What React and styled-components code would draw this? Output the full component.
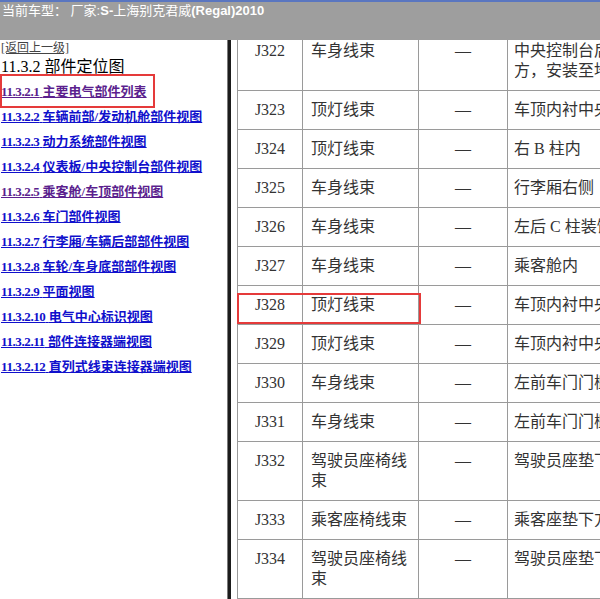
import React from 'react';
import styled, { createGlobalStyle, css } from 'styled-components';

const Global = createGlobalStyle`
  html, body { margin: 0; padding: 0; background: #fff; }
  body { font-family: "Liberation Serif", "Noto Sans CJK SC", serif; }
  * { box-sizing: border-box; }
`;

const Page = styled.div`
  width: 600px;
  height: 599px;
  display: flex;
  flex-direction: column;
  overflow: hidden;
`;

const Header = styled.header`
  flex: none;
  height: 40px;
  background: #9e9e9e;
  border-top: 2px solid #5a76c0;
  color: #fff;
  font: 13px/16px "Liberation Sans", "Noto Sans CJK SC", sans-serif;
  padding: 1px 0 0 2px;
  white-space: nowrap;
`;

const Latin = styled.span`
  font-weight: bold;
`;

const Body = styled.div`
  flex: 1;
  min-height: 0;
  display: flex;
`;

const LeftPane = styled.nav`
  flex: none;
  width: 228px;
  border-right: 1px solid #7c7c7c;
  padding: 0 0 0 1px;
  display: flex;
  flex-direction: column;
`;

const Splitter = styled.div`
  flex: none;
  width: 3px;
  background: #1c1c1c;
`;

const BackLink = styled.a`
  display: block;
  width: fit-content;
  font: 12px/16px "Liberation Serif", "Noto Sans CJK SC", serif;
  color: #444;
  text-decoration: underline;
`;

const Title = styled.h3`
  margin: 0;
  font: 16px/22px "Liberation Serif", "Noto Sans CJK SC", serif;
  color: #000;
`;

const LinkList = styled.ul`
  list-style: none;
  margin: 0;
  padding: 0;
  display: flex;
  flex-direction: column;
`;

const LinkItem = styled.li`
  position: relative;
  line-height: 25px;
  height: 25px;
  ${(p) =>
    p.$marked &&
    css`
      &::after {
        content: "";
        position: absolute;
        left: -1px;
        top: -4px;
        width: 151px;
        height: 30px;
        border: 2px solid #e53a3a;
      }
    `}
`;

const NavLink = styled.a`
  font: bold 13px/25px "Liberation Serif", "Noto Sans CJK SC", serif;
  color: ${(p) => (p.$visited ? '#5b1f8e' : '#1010cc')};
  text-decoration: underline;
  white-space: nowrap;
`;

const Num = styled.span`
  letter-spacing: -0.4px;
`;

const RightPane = styled.main`
  flex: 1;
  min-width: 0;
  overflow: hidden;
  padding-left: 6px;
`;

const Table = styled.table`
  margin-top: -9px;
  border-collapse: collapse;
  table-layout: fixed;
  width: 430px;
  color: #333;
  font: 16px/20px "Liberation Serif", "Noto Sans CJK SC", serif;
`;

const Cell = styled.td`
  border: 1px solid #9a9a9a;
  padding: 9px 8px 9px 8px;
  vertical-align: top;
  text-align: ${(p) => (p.$center ? 'center' : 'left')};
  ${(p) => p.$pad && css`padding-left: ${p.$pad}px;`}
  position: relative;
  ${(p) =>
    p.$marked &&
    css`
      &::after {
        content: "";
        position: absolute;
        left: -1px;
        top: 7px;
        width: 180px;
        height: 27px;
        border: 2px solid #e53a3a;
      }
    `}
`;

const links = [
  ['11.3.2.1', '主要电气部件列表', true, true],
  ['11.3.2.2', '车辆前部/发动机舱部件视图'],
  ['11.3.2.3', '动力系统部件视图'],
  ['11.3.2.4', '仪表板/中央控制台部件视图'],
  ['11.3.2.5', '乘客舱/车顶部件视图', true],
  ['11.3.2.6', '车门部件视图'],
  ['11.3.2.7', '行李厢/车辆后部部件视图'],
  ['11.3.2.8', '车轮/车身底部部件视图'],
  ['11.3.2.9', '平面视图'],
  ['11.3.2.10', '电气中心标识视图'],
  ['11.3.2.11', '部件连接器端视图'],
  ['11.3.2.12', '直列式线束连接器端视图'],
];

const rows = [
  ['J322', '车身线束', '中央控制台后部下方，安装至地板上'],
  ['J323', '顶灯线束', '车顶内衬中央'],
  ['J324', '顶灯线束', '右 B 柱内'],
  ['J325', '车身线束', '行李厢右侧'],
  ['J326', '车身线束', '左后 C 柱装饰板'],
  ['J327', '车身线束', '乘客舱内'],
  ['J328', '顶灯线束', '车顶内衬中央', true],
  ['J329', '顶灯线束', '车顶内衬中央'],
  ['J330', '车身线束', '左前车门门槛'],
  ['J331', '车身线束', '左前车门门槛'],
  ['J332', '驾驶员座椅线束', '驾驶员座垫下方'],
  ['J333', '乘客座椅线束', '乘客座垫下方'],
  ['J334', '驾驶员座椅线束', '驾驶员座垫下方'],
];

export default function App() {
  return (
    <Page>
      <Global />
      <Header>
        当前车型： 厂家:<Latin>S-</Latin>上海别克君威<Latin>(Regal)2010</Latin>
      </Header>
      <Body>
        <LeftPane>
          <BackLink href="#">[返回上一级]</BackLink>
          <Title>11.3.2 部件定位图</Title>
          <LinkList>
            {links.map(([n, t, visited, marked]) => (
              <LinkItem key={n} $marked={marked}>
                <NavLink href="#" $visited={visited}>
                  <Num>{n}</Num> {t}
                </NavLink>
              </LinkItem>
            ))}
          </LinkList>
        </LeftPane>
        <Splitter />
        <RightPane>
          <Table>
            <colgroup>
              <col style={{ width: 65 }} />
              <col style={{ width: 116 }} />
              <col style={{ width: 89 }} />
              <col style={{ width: 160 }} />
            </colgroup>
            <tbody>
              {rows.map(([id, harness, loc, marked]) => (
                <tr key={id}>
                  <Cell $center $marked={marked}>{id}</Cell>
                  <Cell>{harness}</Cell>
                  <Cell $center>—</Cell>
                  <Cell $pad={6}>{loc}</Cell>
                </tr>
              ))}
            </tbody>
          </Table>
        </RightPane>
      </Body>
    </Page>
  );
}
